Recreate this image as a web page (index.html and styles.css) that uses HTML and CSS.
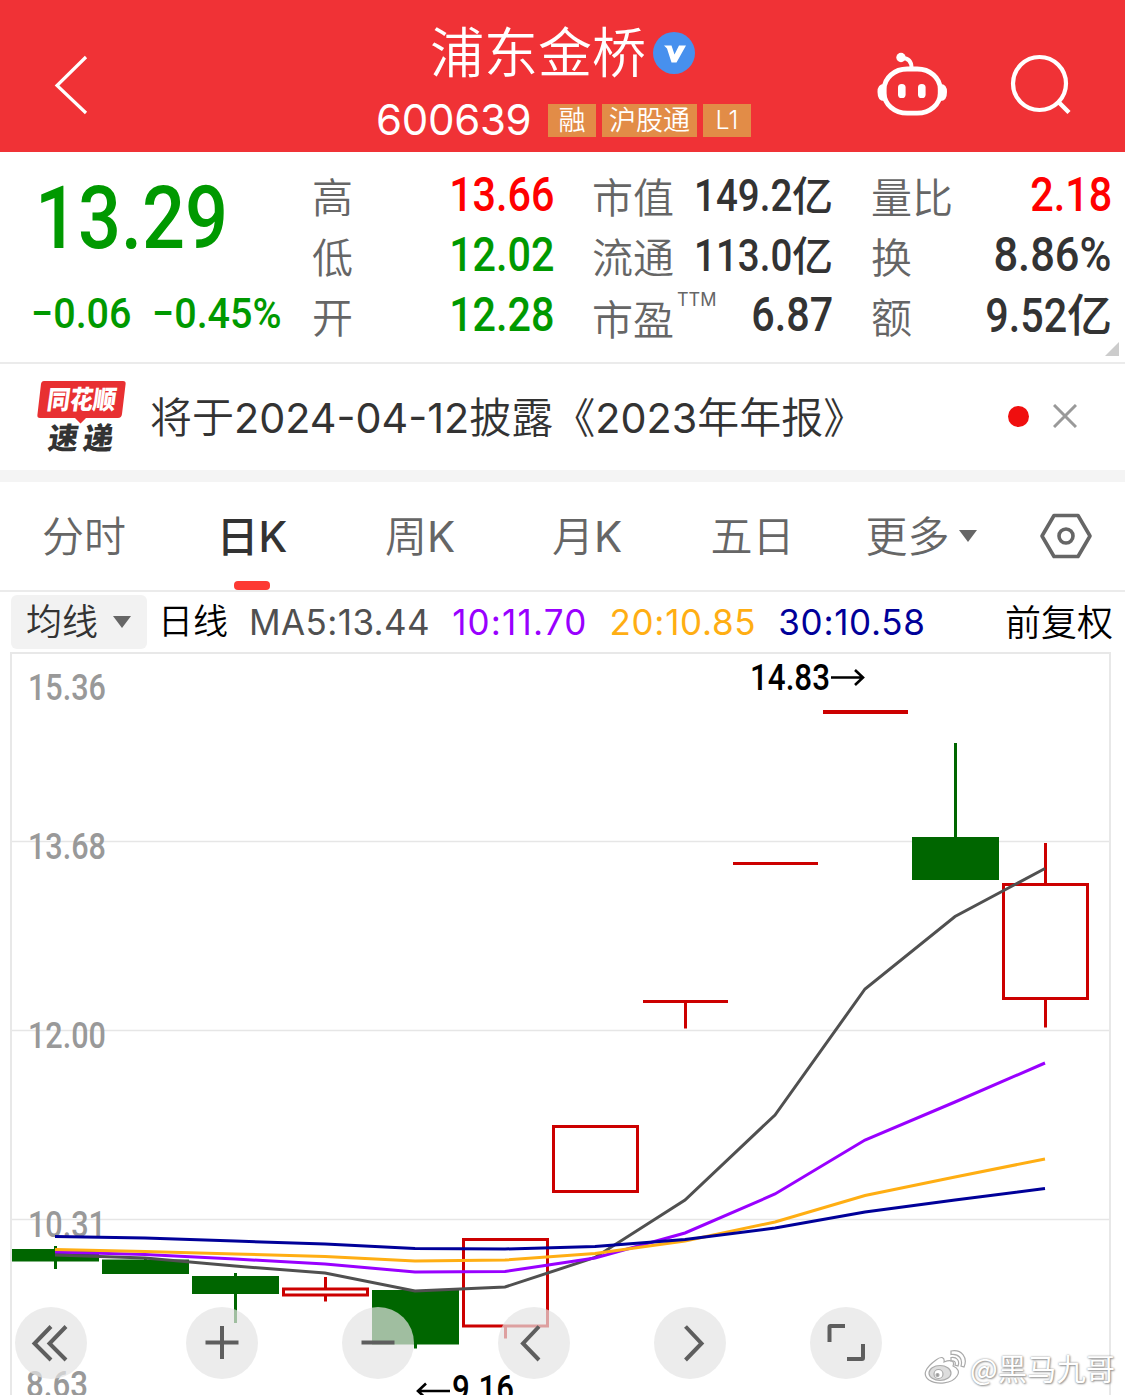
FILE: index.html
```html
<!DOCTYPE html>
<html lang="zh-CN">
   <head>
      <meta charset="utf-8">
      <title>浦东金桥 600639</title>
      <link rel="stylesheet" href="styles.css">
   </head>
   <body>
      <header class="topbar">
         <svg class="back" width="110" height="152" viewBox="0 0 110 152">
            <path d="M86 57L57 85.500L86 113" />
         </svg>
         <div class="stock">
            <div class="stock-name">
               <span>浦东金桥</span>
               <svg width="42" height="42" viewBox="0 0 42 42">
                  <circle cx="21" cy="21" r="21" fill="#4790ee" />
                  <path d="M11 13.500H18.500L21.500 22.500L26 13.500H33L23.500 30.500H18.500L14 16.500Z" fill="#fff" />
               </svg>
            </div>
            <div class="stock-code">
               <span class="code">600639</span>
               <span class="tag">融</span>
               <span class="tag">沪股通</span>
               <span class="tag latin">L1</span>
            </div>
         </div>
         <svg class="tools" width="255" height="152" viewBox="870 0 255 152">
            <circle cx="901" cy="57.500" r="4.700" fill="#fff" stroke="none" />
            <path d="M902 58C908 58 911.500 61 911.500 68" stroke-width="4" />
            <rect x="884.200" y="69" width="56" height="44.200" rx="23" ry="20" stroke-width="4.800" />
            <path d="M884 84Q877.500 84 877.500 92Q877.500 101 884 101ZM940.500 84Q947 84 947 92Q947 101 940.500 101Z" fill="#fff" stroke="none" />
            <rect x="898" y="84" width="7.600" height="14" rx="3.600" fill="#fff" stroke="none" />
            <rect x="918" y="84" width="7.600" height="14" rx="3.600" fill="#fff" stroke="none" />
            <circle cx="1039.500" cy="83.500" r="26.500" stroke-width="4.200" />
            <path d="M1058.500 102L1069 112.500" stroke-width="4.400" />
         </svg>
      </header>

      <section class="quote">
         <div class="price">
            <div class="last"><span class="num">13.29</span></div>
            <div class="change">
               <span class="num">−0.06</span>
               <span class="num">−0.45%</span>
            </div>
         </div>
         <dl class="col col-a">
            <dt>高</dt><dd class="up"><span class="num">13.66</span></dd>
            <dt>低</dt><dd class="down"><span class="num">12.02</span></dd>
            <dt>开</dt><dd class="down"><span class="num">12.28</span></dd>
         </dl>
         <dl class="col col-b">
            <dt>市值</dt><dd><span class="num small">149.2</span><b>亿</b></dd>
            <dt>流通</dt><dd><span class="num small">113.0</span><b>亿</b></dd>
            <dt class="pe">市盈<sup>TTM</sup></dt><dd><span class="num">6.87</span></dd>
         </dl>
         <dl class="col col-c">
            <dt>量比</dt><dd class="up"><span class="num">2.18</span></dd>
            <dt>换</dt><dd><span class="num rate">8.86%</span></dd>
            <dt>额</dt><dd><span class="num">9.52</span><b class="big">亿</b></dd>
         </dl>
         <i class="corner"></i>
      </section>

      <section class="news">
         <svg class="news-logo" width="90" height="74" viewBox="0 0 90 74">
            <path d="M7 1H86Q89 1 88.600 4L85 34Q84.500 38 81 38H49L43.500 43.500L38 38H3Q0 38 .4 35L4 4Q4.500 1 7 1Z" fill="#e83032" />
            <text class="logo-a" transform="translate(9 29) skewX(-8)" textLength="69" lengthAdjust="spacingAndGlyphs">同花顺</text>
            <text class="logo-b" transform="translate(10 69) skewX(-8)">速</text>
            <text class="logo-b" transform="translate(45 69) skewX(-8)">递</text>
         </svg>
         <p>将于<span class="latin">2024-04-12</span>披露《<span class="latin">2023</span>年年报》</p>
         <i class="dot"></i>
         <svg class="close" width="24" height="24" viewBox="0 0 24 24">
            <path d="M1 1L23 23M23 1L1 23" />
         </svg>
      </section>

      <nav class="tabs">
         <a>分时</a>
         <a class="active">日<span class="latin">K</span></a>
         <a>周<span class="latin">K</span></a>
         <a>月<span class="latin">K</span></a>
         <a>五日</a>
         <a class="more">更多<i class="caret"></i></a>
         <svg width="54" height="48" viewBox="0 0 54 48">
            <path d="M15 3.500H39L51 24L39 44.500H15L3 24Z" />
            <circle cx="27" cy="24" r="7" />
         </svg>
      </nav>

      <div class="ma">
         <div class="ma-select">均线<i class="caret"></i></div>
         <span class="period">日线</span>
         <span class="ma-value ma5">MA5:13.44</span>
         <span class="ma-value ma10">10:11.70</span>
         <span class="ma-value ma20">20:10.85</span>
         <span class="ma-value ma30">30:10.58</span>
         <span class="adjust">前复权</span>
      </div>

      <main class="chart">
         <svg class="kline" width="1125" height="743" viewBox="0 652 1125 743">
            <path class="frame" d="M11 1395V653H1110V1395" />
            <path class="grid" d="M12 841.500H1109M12 1030.500H1109M12 1219.500H1109" />
            <g class="axis">
               <text x="28" y="699.500" textLength="78" lengthAdjust="spacingAndGlyphs">15.36</text>
               <text x="28" y="858.500" textLength="78" lengthAdjust="spacingAndGlyphs">13.68</text>
               <text x="28" y="1047.500" textLength="78" lengthAdjust="spacingAndGlyphs">12.00</text>
               <text x="28" y="1236.500" textLength="78" lengthAdjust="spacingAndGlyphs">10.31</text>
               <text x="26" y="1396.500" textLength="62" lengthAdjust="spacingAndGlyphs">8.63</text>
            </g>
            <g class="fall">
               <path d="M12 1249H99V1261.500H12ZM102 1259.500H189V1274H102ZM192 1276H279V1294H192ZM372 1290H459V1344.500H372ZM912 837H999V880H912Z" />
               <path d="M54 1246H57V1269H54ZM144 1257H147V1262H144ZM234 1273H237V1323H234ZM414 1344H417V1348.500H414ZM954 743H957V838H954Z" />
            </g>
            <g class="rise">
               <path d="M283.500 1289H367.500V1295H283.500ZM463.500 1239.500H547.500V1326H463.500ZM553.500 1126.500H637.500V1191.500H553.500ZM1003.500 884.500H1087.500V998.500H1003.500Z" />
               <path d="M325.500 1277V1288M325.500 1296V1301.500M505.500 1327V1338.500M643 1001.500H728M685.500 1002V1028.500M733 863.500H818M1045.500 843V884M1045.500 999V1027.500" />
               <path d="M823 712H908" stroke-width="4" />
            </g>
            <polyline class="line5" points="55,1255 145,1258 235,1266 325,1273 415,1291 505,1287 595,1257.500 685,1200 775,1115 865,989 955,916.500 1045,868.500" />
            <polyline class="line10" points="55,1252 145,1254.500 235,1259 325,1264 415,1272 505,1271.500 595,1258 685,1233 775,1194 865,1140 955,1102 1045,1063" />
            <polyline class="line20" points="55,1249.500 145,1251.500 235,1254 325,1256.500 415,1261 505,1260 595,1253.500 685,1241 775,1222 865,1195.500 955,1177 1045,1159" />
            <polyline class="line30" points="55,1236.500 145,1238 235,1241 325,1244 415,1248.500 505,1249 595,1246.500 685,1239.500 775,1228 865,1212 955,1200 1045,1188.500" />
            <g class="mark">
               <text x="750" y="690" textLength="80" lengthAdjust="spacingAndGlyphs">14.83</text>
               <path d="M831 677.500H863M855 670L863 677.500L855 685" />
               <text x="452" y="1401" textLength="62" lengthAdjust="spacingAndGlyphs">9.16</text>
               <path d="M450 1391H418M426 1383.500L418 1391L426 1398.500" />
            </g>
         </svg>
         <div class="controls">
            <button class="first"><svg viewBox="0 0 72 72"><path d="M36 19.500L19.500 36.500L36 53M51 19.500L34.500 36.500L51 53" /></svg></button>
            <button><svg viewBox="0 0 72 72"><path d="M36 19V52M19.500 35.500H52.500" /></svg></button>
            <button><svg viewBox="0 0 72 72"><path d="M19.500 35.500H52.500" /></svg></button>
            <button><svg viewBox="0 0 72 72"><path d="M41 19.500L25 36.500L41 53" /></svg></button>
            <button><svg viewBox="0 0 72 72"><path d="M31.500 19.500L47.500 36.500L31.500 53" /></svg></button>
            <button><svg viewBox="0 0 72 72"><path d="M19.500 35V20Q19.500 19 20.500 19H35M37 52H52Q53 52 53 51V37" /></svg></button>
         </div>
         <div class="watermark">
            <svg width="42" height="36" viewBox="0 0 42 36">
               <path d="M12 11C17 7 21 8 20 13C27 10 31 12 29 17C34 19 36 23 33 27C28 35 13 36 5 31C-2 26 1 19 12 11Z" />
               <ellipse class="eye" cx="16" cy="24" rx="11" ry="7.500" />
               <circle cx="14.500" cy="25" r="4.500" />
               <circle class="pupil" cx="13.500" cy="26" r="1.500" />
               <path d="M27 8.500C33 7.500 36 12 34 17L31 16C32 13 30.500 11.500 27 12ZM27 2C38 0 44 9 40 18L37 17C39 10 35 4.500 27 5.500Z" />
            </svg>
            <span>@黑马九哥</span>
         </div>
      </main>
   </body>
</html>
```

FILE: styles.css
```css
body {
   margin: 0;
   width: 1125px;
   height: 1395px;
   overflow: hidden;
   background: #fff;
   color: #333;
   font-family: "Noto Sans CJK SC", sans-serif;
   font-weight: 350;
}

svg {
   display: block;
}

p,
dl,
dd {
   margin: 0;
}

.latin {
   font-family: Inter, "Liberation Sans", sans-serif;
   font-weight: 400;
}

/* narrow digits for prices */
.num {
   display: inline-block;
   font-family: Roboto, sans-serif;
   font-weight: 500;
   transform: scaleX(0.86);
   transform-origin: right center;
}

.caret {
   display: inline-block;
   border: 9px solid transparent;
   border-top: 12px solid #666;
   border-bottom: 0;
}

/* top bar */
.topbar {
   display: flex;
   height: 152px;
   background: #f03236;
   color: #fff;
}

.back,
.tools {
   fill: none;
   stroke: #fff;
   stroke-width: 3.2;
}

.tools {
   margin-left: auto;
}

.stock {
   width: 376px;
   padding: 22px 0 0 266px;
}

.stock-name {
   display: flex;
   align-items: center;
   height: 62px;
   padding-left: 54px;
   font-size: 54px;
   line-height: 56px;
}

.stock-name span {
   height: 62px;
}

.stock-name svg {
   margin-left: 7px;
}

.stock-code {
   display: flex;
   align-items: center;
   gap: 6px;
   margin-top: 17px;
   height: 38px;
}

.code {
   width: 166px;
   font: 400 42px/38px Inter, sans-serif;
   letter-spacing: -0.3px;
}

.tag {
   height: 33px;
   padding: 0 7px;
   background: #e28c47;
   font-size: 27px;
   line-height: 29px;
}

.tag:nth-child(2),
.tag:last-child {
   width: 34px;
   text-align: center;
}

.tag.latin {
   font-size: 25px;
   line-height: 32px;
   font-weight: 300;
}

/* quote */
.quote {
   position: relative;
   display: flex;
   height: 197px;
   padding-top: 13px;
   border-bottom: 2px solid #ebebeb;
}

.price {
   width: 312px;
   color: #090;
}

.price .num {
   transform-origin: left center;
}

.last {
   height: 119px;
   padding-left: 35px;
   font-size: 88px;
   line-height: 90px;
}

.change {
   display: flex;
   gap: 14px;
   padding-left: 31px;
   font-size: 42px;
   line-height: 60px;
}

.change .num {
   transform: scaleX(0.94);
}

.col {
   display: grid;
   grid-template-columns: auto 1fr;
   grid-auto-rows: 60px;
   font-size: 41px;
   line-height: 60px;
}

.col dt {
   color: #666;
   white-space: nowrap;
}

.col dd {
   text-align: right;
   white-space: nowrap;
   line-height: 56px;
}

.col dd .num {
   font-size: 48px;
}

.col dd .num.small {
   font-size: 44px;
   transform: scaleX(0.875);
}

.col dd .num.rate {
   transform: scaleX(0.905);
}

.col b {
   font-weight: 500;
}

.col .big {
   font-size: 45px;
}

.col-a {
   width: 242px;
}

.col-b {
   width: 241px;
   margin-left: 38px;
}

.col-c {
   width: 241px;
   margin-left: 38px;
}

.pe {
   width: 82px;
   line-height: 64px;
}

.pe sup {
   position: absolute;
   margin: 3px 0 0 3px;
   font: 400 18px/24px Inter, sans-serif;
}

.up {
   color: #f00;
}

.down {
   color: #090;
}

.corner {
   position: absolute;
   right: 6px;
   bottom: 6px;
   border: 7.5px solid #ccc;
   border-top-color: transparent;
   border-left-color: transparent;
}

/* news */
.news {
   display: flex;
   align-items: center;
   height: 106px;
   padding-left: 37px;
   border-bottom: 12px solid #f4f4f4;
}

.news-logo {
   overflow: visible;
}

.news p {
   width: 858px;
   margin: 0 0 6px 23px;
   font-size: 42px;
   white-space: nowrap;
}

.news .latin {
   font-size: 41.3px;
}

.logo-a,
.logo-b {
   font-weight: 900;
   font-size: 26px;
   fill: #fff;
}

.logo-b {
   font-size: 30px;
   fill: #333;
}

.dot {
   width: 21px;
   height: 21px;
   margin-bottom: 1px;
   border-radius: 50%;
   background: #f00f0f;
}

.close {
   margin: 0 0 2px 24px;
   stroke: #999;
   stroke-width: 3;
}

/* tabs */
.tabs {
   display: grid;
   grid-template-columns: 168px 168px 168px 166px 165px 172px 1fr;
   height: 108px;
   border-bottom: 2px solid #ebebeb;
   color: #666;
   font-size: 42px;
   line-height: 104px;
   text-align: center;
}

.tabs a {
   position: relative;
   height: 108px;
}

.tabs .active {
   color: #333;
   font-weight: 500;
}

.active .latin {
   font-weight: 500;
}

.active::after {
   content: "";
   position: absolute;
   left: calc(50% - 18px);
   bottom: 0;
   width: 36px;
   height: 9px;
   border-radius: 4px;
   background: #fd3a33;
}

.more .caret {
   margin-left: 9px;
   vertical-align: 10px;
}

.tabs svg {
   place-self: center;
   fill: none;
   stroke: #666;
   stroke-width: 3.6;
   stroke-linejoin: round;
}

/* moving averages */
.ma {
   display: flex;
   align-items: center;
   height: 60px;
   padding: 0 12px 0 11px;
   color: #000;
   font-size: 35px;
}

.ma-select {
   width: 121px;
   height: 54px;
   padding-left: 15px;
   border-radius: 6px;
   background: #f2f2f2;
   color: #333;
   font-size: 36px;
   line-height: 49px;
}

.ma-select .caret {
   margin-left: 15px;
   vertical-align: 7px;
}

.period {
   margin: 0 -1px 7px 11px;
}

.ma-value {
   margin-left: 22px;
   font: 400 35px/60px Inter, sans-serif;
   letter-spacing: 0.7px;
}

.ma5 {
   color: #505050;
   letter-spacing: 0.4px;
}

.ma10 {
   color: #90f;
   letter-spacing: 1.2px;
}

.ma20 {
   color: #ffae13;
}

.ma30 {
   color: #009;
}

.adjust {
   margin: 0 0 4px auto;
   font-size: 36px;
}

/* chart */
.chart {
   position: relative;
   height: 743px;
}

.kline {
   fill: none;
}

.kline text {
   font-family: Roboto, sans-serif;
   font-size: 37px;
   font-weight: 500;
}

.frame {
   stroke: #e8e8e8;
   stroke-width: 2;
}

.grid {
   stroke: #e6e6e6;
   stroke-width: 1.3;
}

.axis {
   fill: #999;
}

.fall {
   fill: #060;
}

.rise {
   stroke: #c00;
   stroke-width: 3;
}

.kline polyline {
   stroke-width: 3;
}

.line5 {
   stroke: #505050;
}

.line10 {
   stroke: #90f;
}

.line20 {
   stroke: #ffae13;
}

.line30 {
   stroke: #009;
}

.mark text {
   fill: #000;
}

.mark path {
   stroke: #000;
   stroke-width: 2.6;
}

.controls {
   position: absolute;
   left: 15px;
   bottom: 16px;
   display: flex;
   gap: 84px;
}

.controls button {
   width: 72px;
   height: 72px;
   padding: 0;
   border: 0;
   border-radius: 50%;
   background: rgba(228, 228, 228, 0.7);
}

.controls .first {
   margin-right: 15px;
}

.controls svg {
   fill: none;
   stroke: #5e5e5e;
   stroke-width: 4;
}

.watermark {
   position: absolute;
   right: 10px;
   bottom: 10px;
   display: flex;
   align-items: center;
   gap: 4px;
   color: #fff;
   font-size: 29.3px;
   line-height: 36px;
   font-weight: 400;
   text-shadow: 0 0 2px #888, 1px 1px 2px #999;
}

.watermark svg {
   fill: #fff;
   stroke: #aaa;
   stroke-width: 1.2;
}

.watermark .eye {
   fill: #ddd;
}

.watermark .pupil {
   fill: #999;
}
```
